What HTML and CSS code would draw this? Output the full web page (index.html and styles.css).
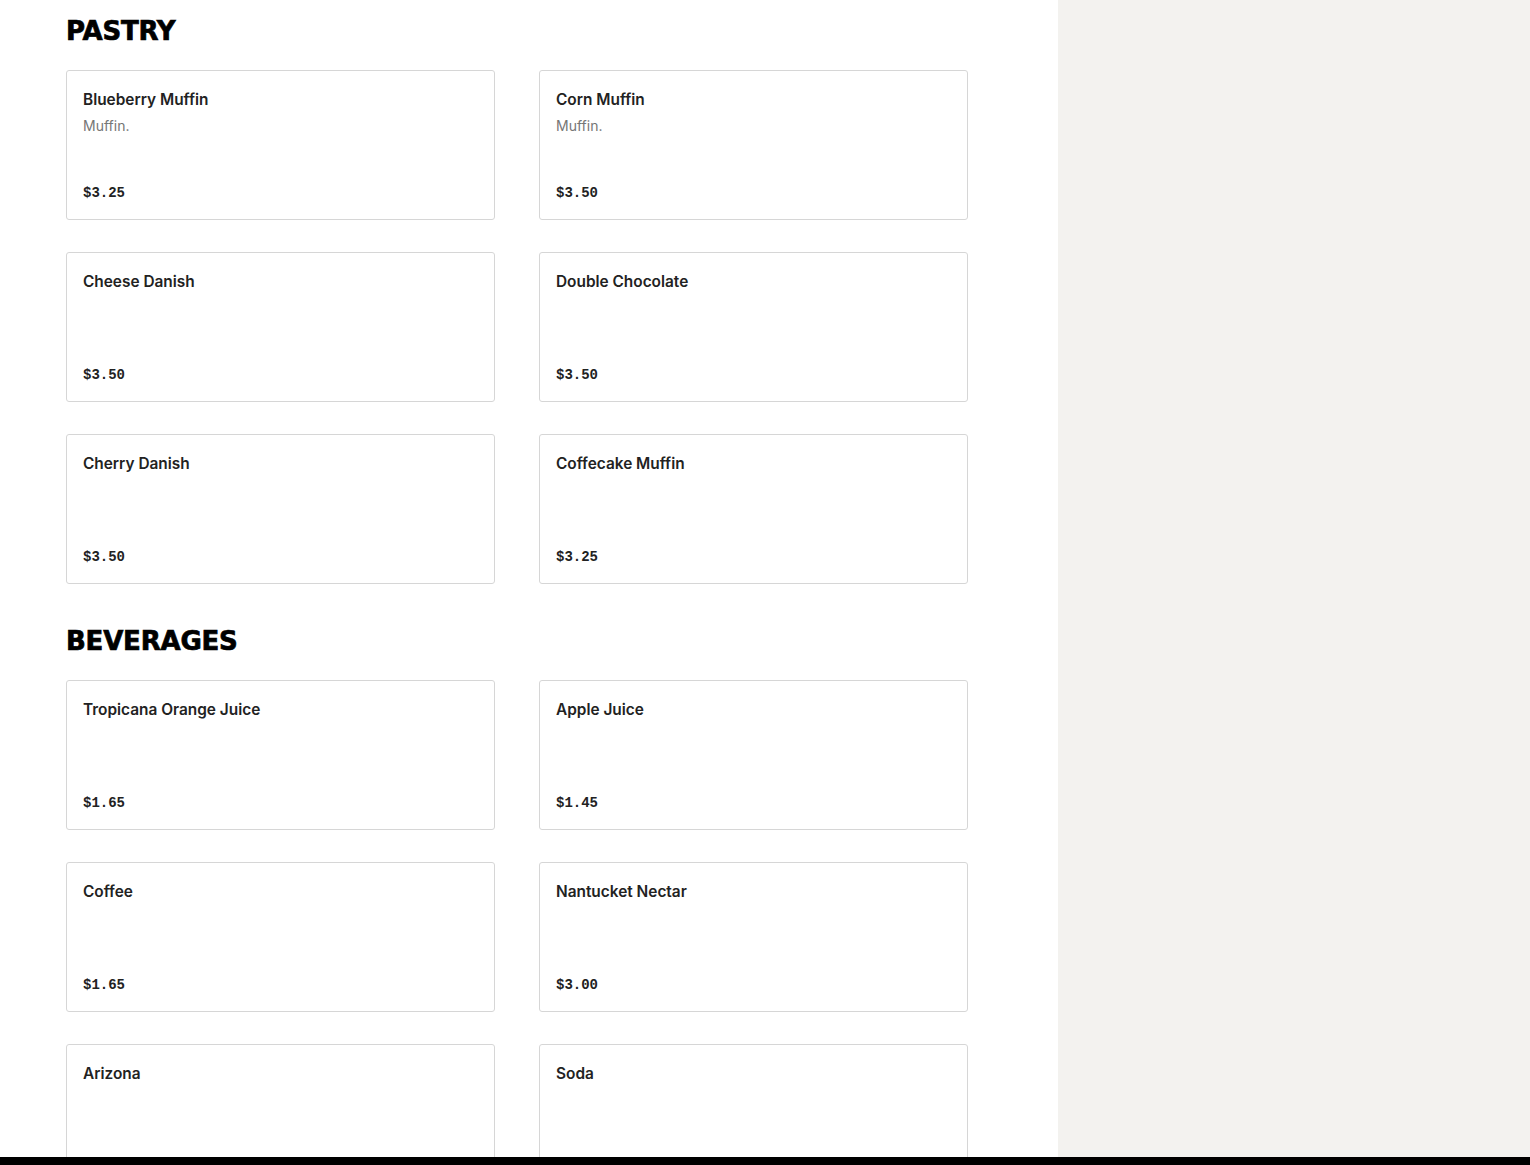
FILE: index.html
```html
<!DOCTYPE html>
<html>
<head>
<meta charset="utf-8">
<link rel="stylesheet" href="styles.css">
</head>
<body>
<div class="page">
  <main class="menu">
    <section class="section">
      <h2 class="section-title">PASTRY</h2>
      <div class="grid">
        <div class="card"><div class="card-top"><div class="name">Blueberry Muffin</div><div class="desc">Muffin.</div></div><div class="price">$3.25</div></div>
        <div class="card"><div class="card-top"><div class="name">Corn Muffin</div><div class="desc">Muffin.</div></div><div class="price">$3.50</div></div>
        <div class="card"><div class="card-top"><div class="name">Cheese Danish</div></div><div class="price">$3.50</div></div>
        <div class="card"><div class="card-top"><div class="name">Double Chocolate</div></div><div class="price">$3.50</div></div>
        <div class="card"><div class="card-top"><div class="name">Cherry Danish</div></div><div class="price">$3.50</div></div>
        <div class="card"><div class="card-top"><div class="name">Coffecake Muffin</div></div><div class="price">$3.25</div></div>
      </div>
    </section>
    <section class="section">
      <h2 class="section-title">BEVERAGES</h2>
      <div class="grid">
        <div class="card"><div class="card-top"><div class="name">Tropicana Orange Juice</div></div><div class="price">$1.65</div></div>
        <div class="card"><div class="card-top"><div class="name">Apple Juice</div></div><div class="price">$1.45</div></div>
        <div class="card"><div class="card-top"><div class="name">Coffee</div></div><div class="price">$1.65</div></div>
        <div class="card"><div class="card-top"><div class="name">Nantucket Nectar</div></div><div class="price">$3.00</div></div>
        <div class="card"><div class="card-top"><div class="name">Arizona</div></div><div class="price">$2.50</div></div>
        <div class="card"><div class="card-top"><div class="name">Soda</div></div><div class="price">$1.50</div></div>
      </div>
    </section>
  </main>
  <aside class="side"></aside>
</div>
<div class="bottom-bar"></div>
</body>
</html>
```
FILE: styles.css
```css
html, body {
  margin: 0;
  padding: 0;
  background: #ffffff;
  height: 100%;
  overflow: hidden;
}
.page {
  display: flex;
  min-height: 1165px;
}
.menu {
  width: 1058px;
  flex: none;
  box-sizing: border-box;
  padding: 10px 0 0 66px;
  background: #ffffff;
}
.side {
  flex: 1;
  background: #f3f2ef;
}
.section {
  margin-bottom: 36px;
}
.section-title {
  margin: 0 0 20px 0;
  height: 40px;
  line-height: 42px;
  font-family: "DejaVu Sans", sans-serif;
  font-weight: 900;
  font-size: 26px;
  letter-spacing: -0.2px;
  -webkit-text-stroke: 0.7px #000;
  color: #000;
}
.grid {
  display: grid;
  grid-template-columns: 429px 429px;
  column-gap: 44px;
  row-gap: 32px;
}
.card {
  box-sizing: border-box;
  height: 150px;
  border: 1px solid #d6d6d6;
  border-radius: 3px;
  padding: 17px 16px 16px 16px;
  display: flex;
  flex-direction: column;
  justify-content: space-between;
  background: #fff;
}
.name {
  font-family: "Inter", "Liberation Sans", sans-serif;
  font-weight: 600;
  font-size: 15.4px;
  line-height: 24px;
  color: #222;
}
.desc {
  font-family: "Inter", "Liberation Sans", sans-serif;
  font-size: 14px;
  line-height: 20px;
  margin-top: 4px;
  color: #767676;
}
.price {
  font-family: "Liberation Mono", "DejaVu Sans Mono", monospace;
  font-weight: bold;
  font-size: 14px;
  line-height: 20px;
  color: #222;
}
.bottom-bar {
  position: fixed;
  left: 0;
  right: 0;
  bottom: 0;
  height: 8px;
  background: #000;
}
```
